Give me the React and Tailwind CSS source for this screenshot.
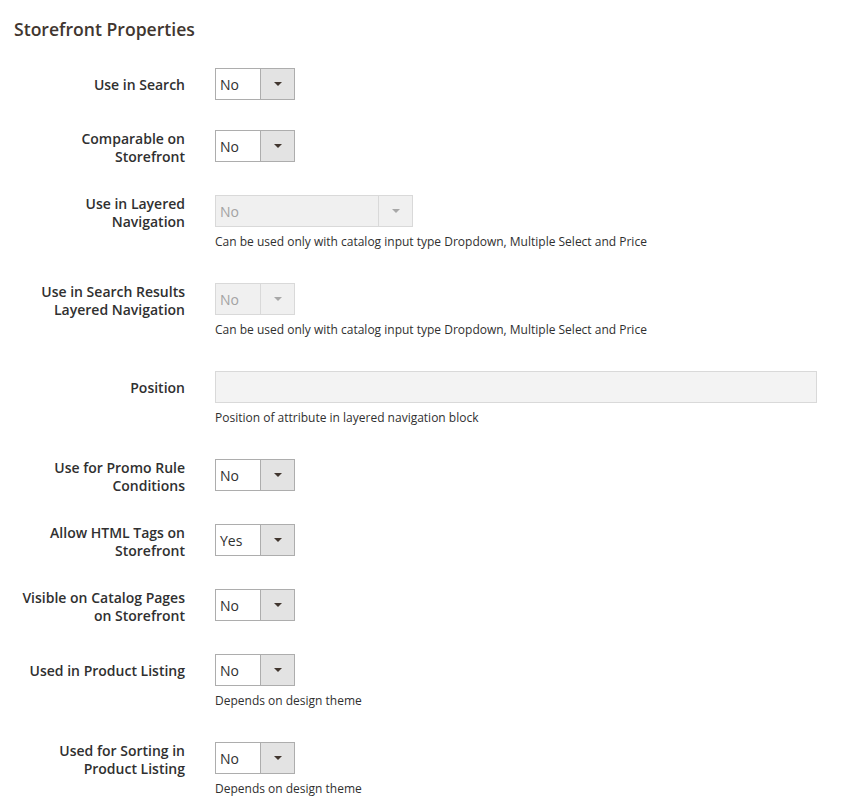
import React from "react";

const rows = [
  { label: ["Use in Search"], value: "No", mt: 27 },
  { label: ["Comparable on", "Storefront"], value: "No", mt: 30 },
  { label: ["Use in Layered", "Navigation"], value: "No", mt: 33, disabled: true, wide: true, hint: "Can be used only with catalog input type Dropdown, Multiple Select and Price" },
  { label: ["Use in Search Results", "Layered Navigation"], value: "No", mt: 32, disabled: true, hint: "Can be used only with catalog input type Dropdown, Multiple Select and Price" },
  { label: ["Position"], input: true, mt: 32, hint: "Position of attribute in layered navigation block" },
  { label: ["Use for Promo Rule", "Conditions"], value: "No", mt: 32 },
  { label: ["Allow HTML Tags on", "Storefront"], value: "Yes", mt: 33 },
  { label: ["Visible on Catalog Pages", "on Storefront"], value: "No", mt: 33 },
  { label: ["Used in Product Listing"], value: "No", mt: 33, hint: "Depends on design theme" },
  { label: ["Used for Sorting in", "Product Listing"], value: "No", mt: 32, hint: "Depends on design theme" },
];

function Select({ value, disabled, wide }) {
  if (disabled) {
    return (
      <div className={`flex h-8 border border-[#d9d9d9] bg-[#f0f0f0] ${wide ? "w-[198px]" : "w-[80px]"}`}>
        <div className="flex-1 flex items-center pl-[4px] text-[14px] text-[#a3a3a3]">{value}</div>
        <div className="w-[34px] flex items-center justify-center border-l border-[#d9d9d9]">
          <span className="w-0 h-0 border-x-[4px] border-x-transparent border-t-[4px] border-t-[#a8a8a8]"></span>
        </div>
      </div>
    );
  }
  return (
    <div className="flex h-8 w-[80px] border border-[#adadad] bg-white">
      <div className="flex-1 flex items-center pl-[4px] text-[14px] text-[#303030]">{value}</div>
      <div className="w-[34px] flex items-center justify-center border-l border-[#adadad] bg-[#e3e3e3]">
        <span className="w-0 h-0 border-x-[4px] border-x-transparent border-t-[4px] border-t-[#41362f]"></span>
      </div>
    </div>
  );
}

export default function App() {
  return (
    <div className="bg-white min-h-[810px] w-[856px]" style={{ fontFamily: '"Open Sans", "Noto Sans", sans-serif' }}>
      <div className="pt-[17px] pl-[14px]">
        <h2 className="text-[17.6px] leading-[24px] font-semibold text-[#41362f]">Storefront Properties</h2>
      </div>
      <div className="flex flex-col">
        {rows.map((r, i) => (
          <div key={i} className="flex items-start" style={{ marginTop: r.mt }}>
            <div className="w-[185px] h-8 shrink-0">
              <div
                className={`text-right text-[14px] leading-[18px] font-semibold text-[#303030] whitespace-nowrap ${
                  r.label.length > 1 ? "mt-0" : "pt-[8px]"
                }`}
              >
                {r.label.map((l, j) => (
                  <div key={j}>{l}</div>
                ))}
              </div>
            </div>
            <div className="ml-[30px] flex flex-col">
              {r.input ? (
                <div className="h-8 w-[602px] border border-[#d9d9d9] bg-[#f3f3f3]"></div>
              ) : (
                <Select value={r.value} disabled={r.disabled} wide={r.wide} />
              )}
              {r.hint && (
                <div className="mt-[6px] text-[12px] leading-[18px] text-[#303030] whitespace-nowrap">{r.hint}</div>
              )}
            </div>
          </div>
        ))}
      </div>
    </div>
  );
}
